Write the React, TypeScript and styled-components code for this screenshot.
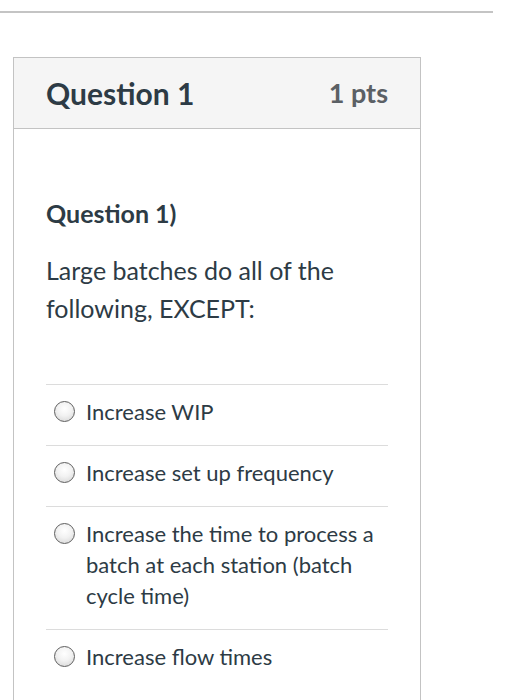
import React from "react";
import styled, { createGlobalStyle } from "styled-components";

const Global = createGlobalStyle`
  html, body { margin: 0; padding: 0; background: #fff; }
  body { font-family: Lato, "Open Sans", sans-serif; color: #2d3b45; }
`;

const TopRule = styled.div`
  margin-top: 11px;
  width: 493px;
  height: 2px;
  background: #c4c4c4;
`;

const Card = styled.section`
  margin: 44px 0 0 13px;
  width: 408px;
  box-sizing: border-box;
  border: 1px solid #c3c3c3;
  border-bottom: none;
  height: 700px;
`;

const Header = styled.header`
  display: flex;
  justify-content: space-between;
  align-items: center;
  height: 70px;
  padding: 0 32px;
  background: #f5f5f5;
  border-bottom: 1px solid #c3c3c3;
`;

const Title = styled.h2`
  margin: 0;
  font-size: 30px;
  line-height: 36px;
  font-weight: 700;
  color: #2d3b45;
`;

const Points = styled.span`
  font-size: 27px;
  line-height: 36px;
  font-weight: 700;
  color: #5b6065;
`;

const Body = styled.div`
  padding: 68px 32px 0 32px;
`;

const QLabel = styled.h3`
  margin: 0;
  font-size: 25px;
  line-height: 33px;
  font-weight: 700;
  color: #2d3b45;
`;

const Prompt = styled.p`
  margin: 21px 0 0;
  font-size: 25px;
  line-height: 38px;
  color: #2d3b45;
`;

const Answers = styled.ul`
  list-style: none;
  margin: 57px 0 0;
  padding: 0;
`;

const Answer = styled.li`
  display: flex;
  align-items: flex-start;
  gap: 11px;
  border-top: 1px solid #dcdcdc;
  padding: 11px 0 18px 8px;
  font-size: 22px;
  line-height: 31px;
  color: #2d3b45;
`;

const Radio = styled.span`
  flex: none;
  width: 19px;
  height: 19px;
  margin-top: 5px;
  border-radius: 50%;
  border: 1px solid #5e5e5e;
  background: radial-gradient(circle at 50% 35%, #ffffff 0%, #f2f2f2 45%, #d2d2d2 100%);
  box-sizing: content-box;
`;

const options = [
  "Increase WIP",
  "Increase set up frequency",
  "Increase the time to process a batch at each station (batch cycle time)",
  "Increase flow times",
];

export default function App() {
  return (
    <>
      <Global />
      <TopRule />
      <Card>
        <Header>
          <Title>Question 1</Title>
          <Points>1 pts</Points>
        </Header>
        <Body>
          <QLabel>Question 1)</QLabel>
          <Prompt>
            Large batches do all of the
            <br />
            following, EXCEPT:
          </Prompt>
          <Answers>
            {options.map((o) => (
              <Answer key={o}>
                <Radio />
                <span>{o}</span>
              </Answer>
            ))}
          </Answers>
        </Body>
      </Card>
    </>
  );
}
